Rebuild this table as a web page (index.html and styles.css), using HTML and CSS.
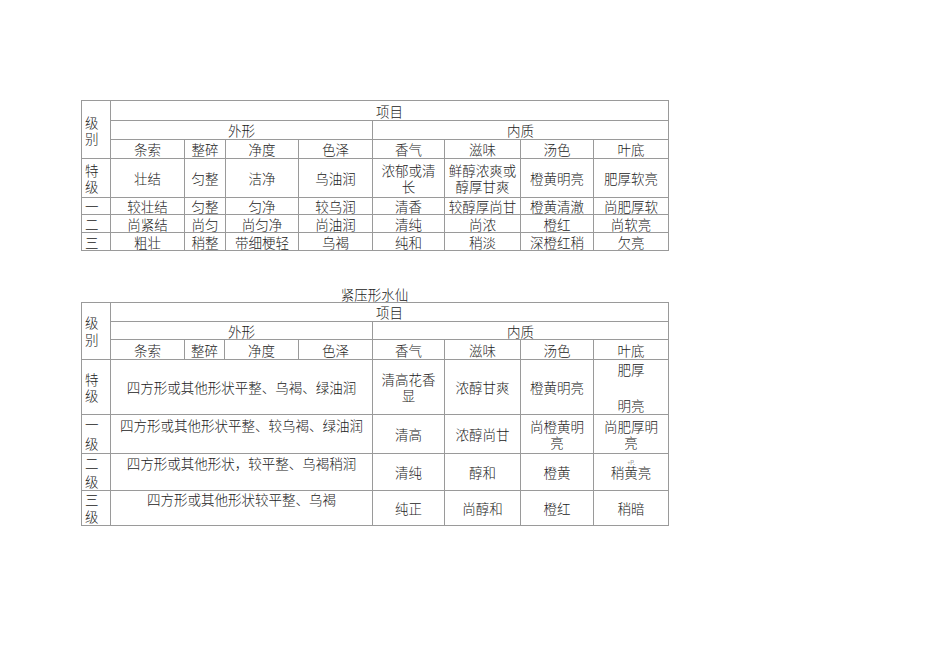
FILE: index.html
```html
<!DOCTYPE html>
<html lang="zh-CN">
<head>
<meta charset="utf-8">
<title>茶叶品质分级</title>
<link rel="stylesheet" href="styles.css">
</head>
<body>
<div class="page">
  <table class="grade t1">
    <colgroup>
      <col class="c0"><col class="c1"><col class="c2"><col class="c3"><col class="c4">
      <col class="c5"><col class="c6"><col class="c7"><col class="c8">
    </colgroup>
    <tr class="h20">
      <td rowspan="3" class="lv">级<br>别</td>
      <td colspan="8">项目</td>
    </tr>
    <tr class="h19">
      <td colspan="4">外形</td>
      <td colspan="4">内质</td>
    </tr>
    <tr class="h19">
      <td>条索</td><td>整碎</td><td>净度</td><td>色泽</td>
      <td>香气</td><td>滋味</td><td>汤色</td><td>叶底</td>
    </tr>
    <tr class="h39">
      <td class="lv">特<br>级</td>
      <td>壮结</td><td>匀整</td><td>洁净</td><td>乌油润</td>
      <td>浓郁或清<br>长</td><td>鲜醇浓爽或<br>醇厚甘爽</td><td>橙黄明亮</td><td>肥厚软亮</td>
    </tr>
    <tr class="h17">
      <td class="lv">一</td>
      <td>较壮结</td><td>匀整</td><td>匀净</td><td>较乌润</td>
      <td>清香</td><td>较醇厚尚甘</td><td>橙黄清澈</td><td>尚肥厚软</td>
    </tr>
    <tr class="h18">
      <td class="lv">二</td>
      <td>尚紧结</td><td>尚匀</td><td>尚匀净</td><td>尚油润</td>
      <td>清纯</td><td>尚浓</td><td>橙红</td><td>尚软亮</td>
    </tr>
    <tr class="h18">
      <td class="lv">三</td>
      <td>粗壮</td><td>稍整</td><td>带细梗轻</td><td>乌褐</td>
      <td>纯和</td><td>稍淡</td><td>深橙红稍</td><td>欠亮</td>
    </tr>
  </table>

  <div class="caption">紧压形水仙</div>
  <table class="grade t2">
    <colgroup>
      <col class="c0"><col class="c1"><col class="c2b"><col class="c3b"><col class="c4">
      <col class="c5"><col class="c6"><col class="c7"><col class="c8">
    </colgroup>
    <tr class="h19">
      <td rowspan="3" class="lv lh17">级<br>别</td>
      <td colspan="8">项目</td>
    </tr>
    <tr class="h18">
      <td colspan="4">外形</td>
      <td colspan="4">内质</td>
    </tr>
    <tr class="h20">
      <td>条索</td><td>整碎</td><td>净度</td><td>色泽</td>
      <td>香气</td><td>滋味</td><td>汤色</td><td>叶底</td>
    </tr>
    <tr class="h54">
      <td class="lv">特<br>级</td>
      <td colspan="4">四方形或其他形状平整、乌褐、绿油润</td>
      <td>清高花香<br>显</td><td>浓醇甘爽</td><td>橙黄明亮</td>
      <td class="lh18">肥厚<br><br>明亮</td>
    </tr>
    <tr class="h38">
      <td class="lv top lh19">一<br>级</td>
      <td colspan="4" class="top pt2">四方形或其他形状平整、较乌褐、绿油润</td>
      <td>清高</td><td>浓醇尚甘</td><td>尚橙黄明<br>亮</td><td>尚肥厚明<br>亮</td>
    </tr>
    <tr class="h37">
      <td class="lv top lh18">二<br>级</td>
      <td colspan="4" class="top pt1">四方形或其他形状，较平整、乌褐稍润</td>
      <td>清纯</td><td>醇和</td><td>橙黄</td>
      <td class="withmark"><span class="mark">+P.</span>稍黄亮</td>
    </tr>
    <tr class="h34">
      <td class="lv top lh17">三<br>级</td>
      <td colspan="4" class="top">四方形或其他形状较平整、乌褐</td>
      <td>纯正</td><td>尚醇和</td><td>橙红</td><td>稍暗</td>
    </tr>
  </table>
</div>
</body>
</html>
```

FILE: styles.css
```css
html, body {
  margin: 0;
  padding: 0;
  background: #ffffff;
}

body {
  font-family: "Noto Sans CJK SC", "Noto Sans", sans-serif;
  color: #222222;
  font-size: 13.5px;
}

.page {
  padding: 100px 0 0 81px;
}

.grade {
  width: 587px;
  table-layout: fixed;
  border-collapse: collapse;
}

.grade td {
  border: 1px solid #9a9a9a;
  padding: 0;
  text-align: center;
  vertical-align: middle;
  line-height: 16px;
  white-space: nowrap;
  overflow: hidden;
  font-weight: 300;
}

.c0 { width: 29px; }
.c1 { width: 74px; }
.c2 { width: 41px; }
.c3 { width: 73px; }
.c2b { width: 40px; }
.c3b { width: 74px; }
.c4 { width: 74px; }
.c5 { width: 72px; }
.c6 { width: 76px; }
.c7 { width: 73px; }
.c8 { width: 75px; }

.grade td.lv {
  text-align: left;
  padding: 0 0 0 3px;
  line-height: 16px;
}

.grade td.lh17 { line-height: 17px; }
.grade td.lh18 { line-height: 18px; }
.grade td.lh19 { line-height: 19px; }

.grade td.top { vertical-align: top; }
.grade td.pt1 { padding-top: 1px; }
.grade td.pt2 { padding-top: 2px; }

.h17 { height: 17px; }
.h18 { height: 18px; }
.h19 { height: 19px; }
.h20 { height: 20px; }
.h34 { height: 34px; }
.h37 { height: 37px; }
.h38 { height: 38px; }
.h39 { height: 39px; }
.h54 { height: 54px; }

.caption {
  width: 587px;
  margin-top: 36px;
  text-align: center;
  line-height: 15px;
  font-weight: 300;
}

.withmark {
  position: relative;
}

.mark {
  position: absolute;
  left: 0;
  right: 0;
  top: 6px;
  font-size: 6px;
  line-height: 6px;
  color: #555555;
}
```
